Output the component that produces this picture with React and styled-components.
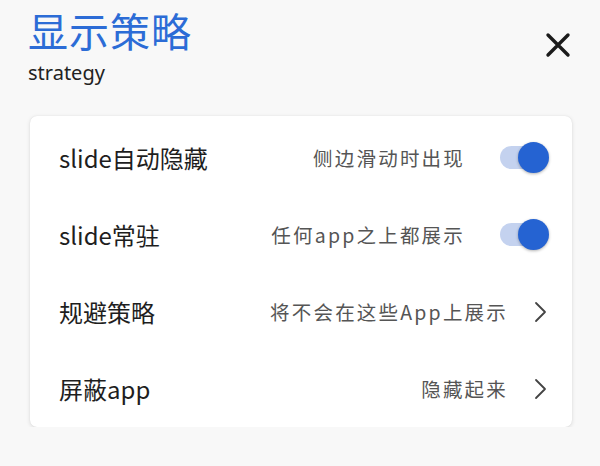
import React from 'react'
import styled, { createGlobalStyle } from 'styled-components'

const GlobalStyle = createGlobalStyle`
  body {
    margin: 0;
    background: #f8f8f8;
    font-family: "Noto Sans", "Noto Sans CJK SC", sans-serif;
  }
`

const Page = styled.div`
  padding: 4px 28px 0 28px;
`

const Header = styled.header`
  display: flex;
  justify-content: space-between;
  align-items: flex-start;
`

const Title = styled.h1`
  margin: 0;
  font-family: "Noto Sans CJK SC", sans-serif;
  font-size: 40px;
  line-height: 52px;
  font-weight: 400;
  color: #2c6cd6;
  letter-spacing: 1px;
`

const Subtitle = styled.div`
  font-size: 20px;
  line-height: 26px;
  color: #222;
  margin-top: 4px;
`

const CloseButton = styled.button`
  border: 0;
  background: none;
  padding: 0;
  margin-top: 27px;
  width: 28px;
  height: 28px;
  cursor: pointer;
`

const Card = styled.section`
  margin: 30px 0 0 2px;
  background: #fff;
  border-radius: 7px;
  box-shadow: 0 1px 4px rgba(0, 0, 0, 0.12), 0 0 1px rgba(0, 0, 0, 0.1);
  padding: 3px 0 0;
`

const Row = styled.div`
  height: 77px;
  display: flex;
  align-items: center;
  padding: 0 25px 0 29px;
  font-family: "Noto Sans CJK SC", sans-serif;
`

const Label = styled.div`
  flex: 1;
  font-size: 24px;
  color: #1e1e1e;
`

const Hint = styled.div`
  font-size: 19.5px;
  color: #555;
  letter-spacing: 2.2px;
  margin-right: ${p => p.$gap}px;
`

const Track = styled.div`
  position: relative;
  width: 47px;
  height: 23px;
  border-radius: 12px;
  background: #c4d2ef;
`

const Thumb = styled.div`
  position: absolute;
  right: -2px;
  top: -4px;
  width: 31px;
  height: 31px;
  border-radius: 50%;
  background: #2563d2;
  box-shadow: 0 1px 3px rgba(0, 0, 0, 0.3);
`

const Toggle = () => (
  <Track>
    <Thumb />
  </Track>
)

const Chevron = () => (
  <svg width="13" height="22" viewBox="0 0 13 22">
    <path d="M2 2 L11 11 L2 20" fill="none" stroke="#444" strokeWidth="1.8" strokeLinecap="round" strokeLinejoin="round" />
  </svg>
)

const items = [
  { label: 'slide自动隐藏', hint: '侧边滑动时出现', kind: 'toggle' },
  { label: 'slide常驻', hint: '任何app之上都展示', kind: 'toggle' },
  { label: '规避策略', hint: '将不会在这些App上展示', kind: 'link' },
  { label: '屏蔽app', hint: '隐藏起来', kind: 'link' },
]

function App() {
  return (
    <Page>
      <GlobalStyle />
      <Header>
        <div>
          <Title>显示策略</Title>
          <Subtitle>strategy</Subtitle>
        </div>
        <CloseButton aria-label="close">
          <svg width="28" height="28" viewBox="0 0 28 28">
            <path d="M4 4 L24 24 M24 4 L4 24" stroke="#1b1b1b" strokeWidth="3.4" strokeLinecap="round" />
          </svg>
        </CloseButton>
      </Header>
      <Card>
        {items.map(item => (
          <Row key={item.label}>
            <Label>{item.label}</Label>
            <Hint $gap={item.kind === 'toggle' ? 35 : 26}>{item.hint}</Hint>
            {item.kind === 'toggle' ? <Toggle /> : <Chevron />}
          </Row>
        ))}
      </Card>
    </Page>
  )
}

export default App
